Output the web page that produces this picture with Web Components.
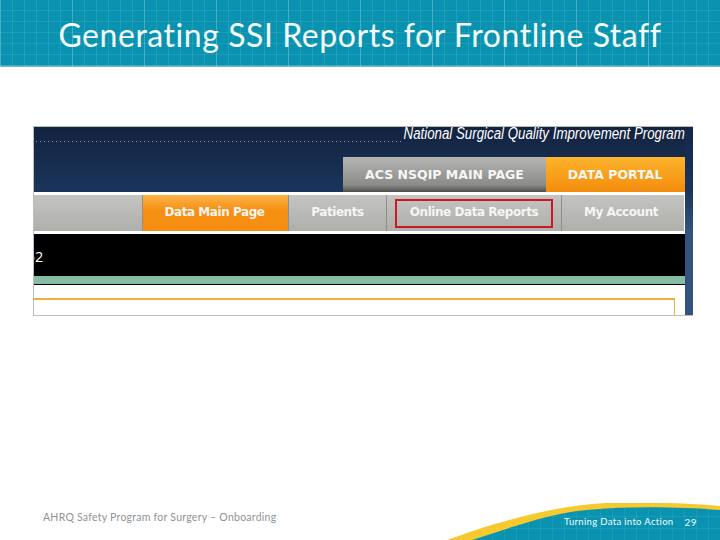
<!DOCTYPE html>
<html>
<head>
<meta charset="utf-8">
<title>Generating SSI Reports for Frontline Staff</title>
<style>
    html, body { margin: 0; padding: 0; background: #fff; }
    body { width: 720px; height: 540px; overflow: hidden; font-family: Lato, sans-serif; }
</style>
</head>
<body>
<slide-page>
    <slide-header slot="header">Generating SSI Reports for Frontline Staff</slide-header>
    <portal-shot slot="main"></portal-shot>
    <slide-footer slot="footer" left="AHRQ Safety Program for Surgery – Onboarding" right="Turning Data into Action" page="29"></slide-footer>
</slide-page>

<script>
class SlidePage extends HTMLElement {
    constructor() {
        super();
        this.attachShadow({ mode: 'open' });
        this.shadowRoot.innerHTML = `
            <style>
                :host {
                    display: flex;
                    flex-direction: column;
                    width: 720px;
                    height: 540px;
                    position: relative;
                    overflow: hidden;
                }
                main {
                    flex: 1;
                    padding: 59px 27px 0 33px;
                }
            </style>
            <slot name="header"></slot>
            <main><slot name="main"></slot></main>
            <slot name="footer"></slot>
        `;
    }
}

class SlideHeader extends HTMLElement {
    constructor() {
        super();
        this.attachShadow({ mode: 'open' });
        this.shadowRoot.innerHTML = `
            <style>
                :host {
                    display: block;
                    height: 66px;
                    border-bottom: 1px solid #6dbccf;
                    background-color: #0a93b0;
                    background-image:
                        repeating-linear-gradient(90deg, rgba(255,255,255,.16) 0 1px, transparent 1px 72px),
                        repeating-linear-gradient(0deg, rgba(255,255,255,.16) 0 1px, transparent 1px 66px),
                        repeating-linear-gradient(90deg, rgba(255,255,255,.1) 0 1px, transparent 1px 12px),
                        repeating-linear-gradient(0deg, rgba(255,255,255,.08) 0 1px, transparent 1px 11px);
                    color: #f4fbfc;
                    font: 32px/69px Lato, sans-serif;
                    letter-spacing: .55px;
                    text-align: center;
                    white-space: nowrap;
                }
            </style>
            <slot></slot>
        `;
    }
}

class PortalShot extends HTMLElement {
    constructor() {
        super();
        this.attachShadow({ mode: 'open' });
        this.shadowRoot.innerHTML = `
            <style>
                :host {
                    display: block;
                    width: 660px;
                    height: 190px;
                    box-sizing: border-box;
                    border: solid #b9bcc0;
                    border-width: 1px 0 1px 1px;
                    background: #fff;
                    overflow: hidden;
                    font-family: "DejaVu Sans", sans-serif;
                }
                .wrap { display: flex; height: 100%; }
                .content { width: 651px; display: flex; flex-direction: column; }
                .edge { flex: 1; background: linear-gradient(#14274a, #1a355c 34%, #33527f 55%); }
                .top {
                    height: 65px;
                    background: linear-gradient(#13233f, #1a355c);
                    display: flex;
                    flex-direction: column;
                }
                .title {
                    height: 30px;
                    display: flex;
                    justify-content: flex-end;
                    align-items: flex-start;
                    color: #fff;
                    font: italic 16px/14px "Liberation Sans", sans-serif;
                    white-space: nowrap;
                }
                .title span:last-child {
                    display: inline-block;
                    margin-left: -57px;
                    transform: scaleX(.83);
                    transform-origin: right center;
                }
                .dots {
                    flex: 1;
                    height: 1px;
                    margin: 14px 0 0 2px;
                    background: repeating-linear-gradient(90deg, #8896ac 0 1px, transparent 1px 4px);
                }
                .tabs { display: flex; justify-content: flex-end; height: 35px; }
                .tab {
                    display: flex;
                    align-items: center;
                    justify-content: center;
                    color: #f6f6f4;
                    font-size: 12.5px;
                    font-weight: 700;
                }
                .tab.gray { width: 203px; background: linear-gradient(#b5b5b3, #8b8b88 80%, #4d4d4b); }
                .tab.orange { width: 139px; background: linear-gradient(#fdb42c, #f38c0c); padding-right: 1px; box-sizing: border-box; }
                .nav {
                    height: 42px;
                    box-sizing: border-box;
                    padding: 3px 1px 3px 0;
                    display: flex;
                    background: #fff;
                }
                .nav div {
                    display: flex;
                    align-items: center;
                    justify-content: center;
                    box-sizing: border-box;
                    border-left: 1px solid #8e8f8c;
                    padding-bottom: 2px;
                    background: linear-gradient(#c4c4c2, #aeaeab);
                    color: #f6f6f4;
                    font-size: 12px;
                    font-weight: 700;
                    letter-spacing: -.45px;
                    position: relative;
                }
                .nav .on { background: linear-gradient(#fcb347, #f68e11 45%); padding-right: 2px; }
                .nav .acct { padding-right: 4px; }
                .nav .box { position: absolute; inset: 4px 8px 3px 8px; border: 2px solid #c81a20; }
                .black {
                    height: 42px;
                    background: #000;
                    color: #fff;
                    font: 14.5px/45px "Open Sans", sans-serif;
                    text-indent: -7.3px;
                    overflow: hidden;
                }
                .green { height: 8px; background: #86bda2; border-bottom: 1px solid #000; }
                .lower { flex: 1; padding: 13px 10px 0 0; }
                .frame { height: 100%; box-sizing: border-box; border: solid #e8b13c; border-width: 2px 1px 0 0; }
            </style>
            <div class="wrap">
                <div class="content">
                    <div class="top">
                        <div class="title"><span class="dots"></span><span>National Surgical Quality Improvement Program</span></div>
                        <div class="tabs">
                            <div class="tab gray">ACS NSQIP MAIN PAGE</div>
                            <div class="tab orange">DATA PORTAL</div>
                        </div>
                    </div>
                    <div class="nav">
                        <div style="width:108px;border-left:0"></div>
                        <div class="on" style="width:146px">Data Main Page</div>
                        <div style="width:98px">Patients</div>
                        <div style="width:175px">Online Data Reports<span class="box"></span></div>
                        <div class="acct" style="width:123px">My Account</div>
                    </div>
                    <div class="black">52</div>
                    <div class="green"></div>
                    <div class="lower"><div class="frame"></div></div>
                </div>
                <div class="edge"></div>
            </div>
        `;
    }
}

class SlideFooter extends HTMLElement {
    constructor() {
        super();
        this.attachShadow({ mode: 'open' });
    }

    connectedCallback() {
        this.shadowRoot.innerHTML = `
            <style>
                :host {
                    display: flex;
                    align-items: flex-end;
                    height: 37px;
                    padding: 0 23px 11px 43px;
                    position: relative;
                    font: 10.5px/14px Lato, sans-serif;
                }
                svg { position: absolute; left: 0; bottom: 0; }
                .left { flex: 1; color: #8f9396; position: relative; padding-bottom: 5px; letter-spacing: .25px; }
                .right { color: #f2fafb; position: relative; font-size: 9.5px; letter-spacing: .33px; }
                .page { color: #f2fafb; position: relative; margin-left: 11px; font-size: 10px; letter-spacing: .45px; }
            </style>
            <svg width="720" height="37" viewBox="0 503 720 37">
                <defs>
                    <pattern id="grid" width="12" height="12" patternUnits="userSpaceOnUse">
                        <path d="M0 0V12M0 0H12" stroke="#fff" stroke-opacity=".12" fill="none"/>
                    </pattern>
                </defs>
                <path d="M447 540C490 524 550 506 606 503C650 502 690 503 720 506V540Z" fill="#f6c92f"/>
                <path d="M472 540C510 528 550 513 587 510C630 506 680 507 720 510V540Z" fill="#0a93b0"/>
                <path d="M472 540C510 528 550 513 587 510C630 506 680 507 720 510V540Z" fill="url(#grid)"/>
            </svg>
            <span class="left">${this.getAttribute('left')}</span>
            <span class="right">${this.getAttribute('right')}</span>
            <span class="page">${this.getAttribute('page')}</span>
        `;
    }
}

customElements.define('slide-page', SlidePage);
customElements.define('slide-header', SlideHeader);
customElements.define('portal-shot', PortalShot);
customElements.define('slide-footer', SlideFooter);
</script>
</body>
</html>
